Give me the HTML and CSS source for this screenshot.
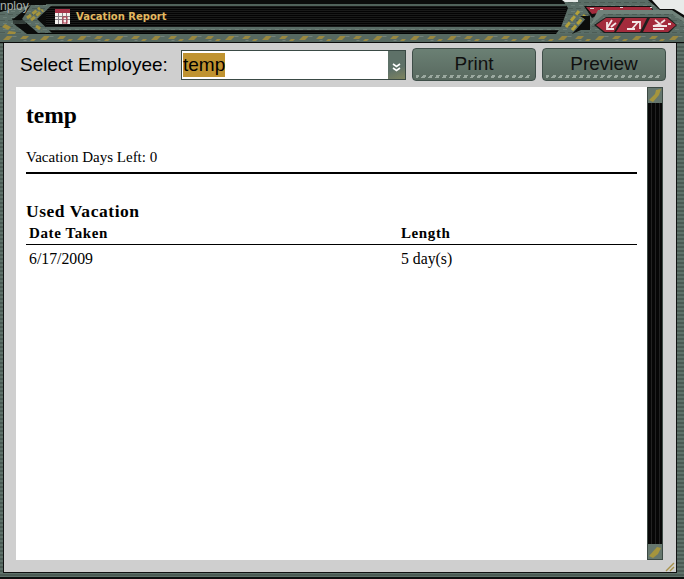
FILE: index.html
```html
<!DOCTYPE html>
<html lang="en">
<head>
<meta charset="utf-8">
<title>Vacation Report</title>
<link rel="stylesheet" href="styles.css">
</head>
<body>
<div class="window">
  <header class="titlebar">
    <svg class="chrome" width="684" height="43" viewBox="0 0 684 43" aria-hidden="true">
      <defs>
        <pattern id="lines" width="3" height="2" patternUnits="userSpaceOnUse">
          <rect width="3" height="2" fill="#040404"/>
          <rect width="3" height="1" fill="#191a19"/>
        </pattern>
        <pattern id="hazard" width="37" height="8" patternUnits="userSpaceOnUse" y="34">
          <rect width="37" height="8" fill="#566860"/>
          <path d="M3 6l4-4h6l-4 4zM20 5l3-3h6l-3 3zM30 7l2-2h4l-2 2z" fill="#99873f"/>
          <path d="M13 2h4l-1 1h-4zM24 6h3l-1 1h-3z" fill="#72807a"/>
        </pattern>
        <pattern id="metal" width="8" height="6" patternUnits="userSpaceOnUse">
          <rect width="8" height="6" fill="#5a6d66"/>
          <rect y="2" width="5" height="1" fill="#4c5c55"/>
          <rect x="3" y="5" width="4" height="1" fill="#6b7e76"/>
        </pattern>
      </defs>
      <rect width="684" height="43" fill="#0b0c0b"/>
      <rect y="34" width="684" height="8" fill="url(#hazard)"/>
      <rect x="46" y="4" width="520" height="2" fill="#50625a"/>
      <rect x="46" y="6" width="520" height="21" fill="url(#lines)"/>
      <rect x="46" y="27" width="516" height="3" fill="url(#metal)"/>
      <rect x="46" y="30" width="516" height="4" fill="url(#lines)"/>
      <path d="M0 12L31 5L12 20H26V24H14L27 34H0Z" fill="url(#metal)"/>
      <path d="M12 19H27M13 21H29M13 23H29" stroke="#0b0c0b"/>
      <path d="M5 24l6 3-3 3-6-3zM9 31l7 1-1 2H7z" fill="#a08c3c"/>
      <path d="M31 5H52L37 19L52 33H38L22 19Z" fill="url(#metal)"/>
      <path d="M27 18L40 8M31 20L43 10M36 26l6 4" stroke="#a5953d" stroke-width="3" stroke-dasharray="5 2"/>
      <path d="M562 0H578V3H566Z" fill="#e8ebe9"/>
      <path d="M564 2H578L590 14L572 34H556L561 27L568 8Z" fill="url(#metal)"/>
      <path d="M566 27L579 11M572 30L585 15" stroke="#b2a03a" stroke-width="3" stroke-dasharray="6 2"/>
      <path d="M578 0H648L660 10L684 18V34H572L590 26L590 16L578 3Z" fill="url(#metal)"/>
      <path d="M652 0H684V15L674 9H660Z" fill="#e8ebe9"/>
      <path d="M584 6H651L655 14H600L592 18Z" fill="#0d0f0e"/>
      <path d="M586 7H651L653 13H598L592 14Z" fill="#a32b3c"/>
      <path d="M590 8h4v1h-4zM600 9h3v1h-3zM620 7h3v1h-3zM650 7h2v1h-2z" fill="#e8d6d8"/>
      <path d="M580 16H590V20H586ZM584 22H590V30H578Z" fill="#0b0c0b"/>
      <path d="M598 10H672L684 18V22L672 14H604L590 26Z" fill="#6f827a"/>
      <path d="M594 25L606 17H668L677 25L669 33H604Z" fill="#1b1f1d"/>
      <path d="M596 25L606 18H622L614 32H605Z" fill="#a32b3c"/>
      <path d="M625 18H647L640 32H616Z" fill="#a32b3c"/>
      <path d="M650 18H667L676 25L668 32H643Z" fill="#a32b3c"/>
      <path d="M612 20L607 28M607 22V29H614M616 23L611 27" stroke="#f2e6e6" stroke-width="1.8" fill="none"/>
      <path d="M632 29L638 22M632 22H640V29M627 29H635" stroke="#f2e6e6" stroke-width="1.8" fill="none"/>
      <path d="M655 20L660 24L653 26H667M653 29H664M665 20L661 23M668 24h3" stroke="#f2e6e6" stroke-width="1.8" fill="none"/>
    </svg>
    <span class="nploy">nploy</span>
    <svg class="cal" width="15" height="15" viewBox="0 0 15 15" aria-hidden="true">
      <rect width="15" height="15" fill="#f4f1ee"/>
      <rect width="15" height="4" fill="#a8344a"/>
      <path d="M0 7.5H15M0 10.5H15M3.5 4V15M7.5 4V15M11.5 4V15" stroke="#8a8288"/>
      <rect x="8" y="8" width="4" height="6" fill="none" stroke="#b13044"/>
    </svg>
    <h2 class="wintitle">Vacation Report</h2>
  </header>
  <main class="panel">
    <div class="toolbar">
      <label class="sel-label">Select Employee:</label>
      <div class="combo">
        <span class="combo-value"><span class="hilite">temp</span></span>
        <span class="combo-btn">
          <svg width="9" height="9" viewBox="0 0 9 9" aria-hidden="true"><path d="M1 1l3.5 2.5L8 1M1 5l3.5 2.5L8 5" fill="none" stroke="#fff" stroke-width="1.6"/></svg>
        </span>
      </div>
      <button class="btn">Print</button>
      <button class="btn">Preview</button>
    </div>
    <div class="body">
      <section class="report">
        <h1 class="name">temp</h1>
        <p class="days">Vacation Days Left: 0</p>
        <hr class="rule">
        <h3 class="sub">Used Vacation</h3>
        <table class="tbl">
          <thead><tr><th class="c1">Date Taken</th><th>Length</th></tr></thead>
          <tbody><tr><td>6/17/2009</td><td>5 day(s)</td></tr></tbody>
        </table>
      </section>
      <div class="scroll">
        <svg class="cap" width="14" height="15" viewBox="0 0 14 15" aria-hidden="true"><rect width="14" height="15" fill="#66776e"/><path d="M1 12L7 6l1-4 5-1-2 6-6 7z" fill="#a5953d"/></svg>
        <span class="track"></span>
        <svg class="cap" width="14" height="15" viewBox="0 0 14 15" aria-hidden="true"><rect width="14" height="15" fill="#66776e"/><path d="M1 12L9 3l4 1-3 6-5 4z" fill="#a5953d"/></svg>
      </div>
    </div>
    <div class="grip-row">
      <svg width="10" height="10" viewBox="0 0 10 10" aria-hidden="true"><path d="M1 9L9 1M5 9L9 5" stroke="#a8924a" stroke-width="1.4"/></svg>
    </div>
  </main>
</div>
</body>
</html>
```
FILE: styles.css
```css
* { box-sizing: border-box; }
html, body { margin: 0; padding: 0; }
body { width: 684px; height: 579px; overflow: hidden; background: #4e5f58; }
.window { width: 684px; height: 579px; display: flex; flex-direction: column; background: repeating-linear-gradient(#5e7169 0 2px, #4b5b54 2px 4px); padding-bottom: 4px; border-bottom: 2px solid #0d0f0e; }
.titlebar { position: relative; height: 42px; flex: none; display: flex; align-items: center; padding: 0 0 9px 55px; gap: 6px; }
.chrome { position: absolute; left: 0; top: 0; }
.nploy { position: absolute; left: 0; top: 1px; font: 12px "Liberation Sans", sans-serif; color: #a9b0ac; line-height: 11px; }
.cal, .wintitle { position: relative; }
.wintitle { margin: 0; font: bold 10px "DejaVu Sans", sans-serif; color: #e3b960; }
.panel { flex: 1; margin: 0 7px 0 3px; background: #cfcfcf; border: 1px solid #111; display: flex; flex-direction: column; }
.toolbar { height: 44px; flex: none; display: flex; align-items: center; padding: 0 0 1px 16px; }
.sel-label { font: 19px "Liberation Sans", sans-serif; color: #000; width: 161px; }
.combo { width: 225px; height: 30px; display: flex; background: #fff; border: 1px solid #3a4a45; margin-right: 6px; }
.combo-value { flex: 1; padding: 2px 1px; font: 19px/22px "Liberation Sans", sans-serif; }
.hilite { display: inline-block; background: #bf9330; height: 24px; line-height: 24px; }
.combo-btn { width: 17px; display: flex; align-items: center; justify-content: center; background: linear-gradient(160deg, #5e7168 60%, #7f8560); padding-top: 6px; }
.btn { position: relative; width: 124px; height: 33px; margin-right: 6px; border: 1px solid #3e4e48; border-radius: 4px; background: linear-gradient(#6b8074, #58695f); font: 19px "Liberation Sans", sans-serif; color: #101010; padding: 0 0 1px; }
.btn::after { content: ""; position: absolute; left: 3px; right: 3px; bottom: 2px; height: 3px; background: repeating-linear-gradient(120deg, #9aa89f 0 3px, transparent 3px 6px); }
.body { flex: 1; display: flex; padding-left: 12px; min-height: 0; }
.report { width: 631px; flex: none; background: #fff; padding: 0 10px; font-family: "Liberation Serif", serif; color: #000; }
.name { margin: 16px 0 0; font-size: 23.5px; line-height: 25px; font-weight: bold; }
.days { margin: 21px 0 0; font-size: 15px; line-height: 17px; }
.rule { height: 2px; margin: 6px 0 0; border: 0; background: #000; }
.sub { margin: 28px 0 0; font-size: 17.5px; line-height: 18px; font-weight: bold; letter-spacing: .55px; }
.tbl { width: 100%; border-collapse: collapse; font-size: 15px; }
th { text-align: left; font-weight: bold; padding: 5px 3px 2px; line-height: 17px; letter-spacing: .6px; border-bottom: 1px solid #000; }
td { padding: 5px 3px; line-height: 17px; font-size: 15.75px; }
.c1 { width: 372px; }
.scroll { width: 16px; flex: none; display: flex; flex-direction: column; background: #5b6e66; border: 1px solid #3c4a44; }
.cap { flex: none; display: block; }
.track { flex: 1; background: repeating-linear-gradient(90deg, #070707 0 3px, #222 3px 4px); }
.grip-row { height: 12px; flex: none; display: flex; justify-content: flex-end; align-items: flex-end; padding-right: 1px; }
```
